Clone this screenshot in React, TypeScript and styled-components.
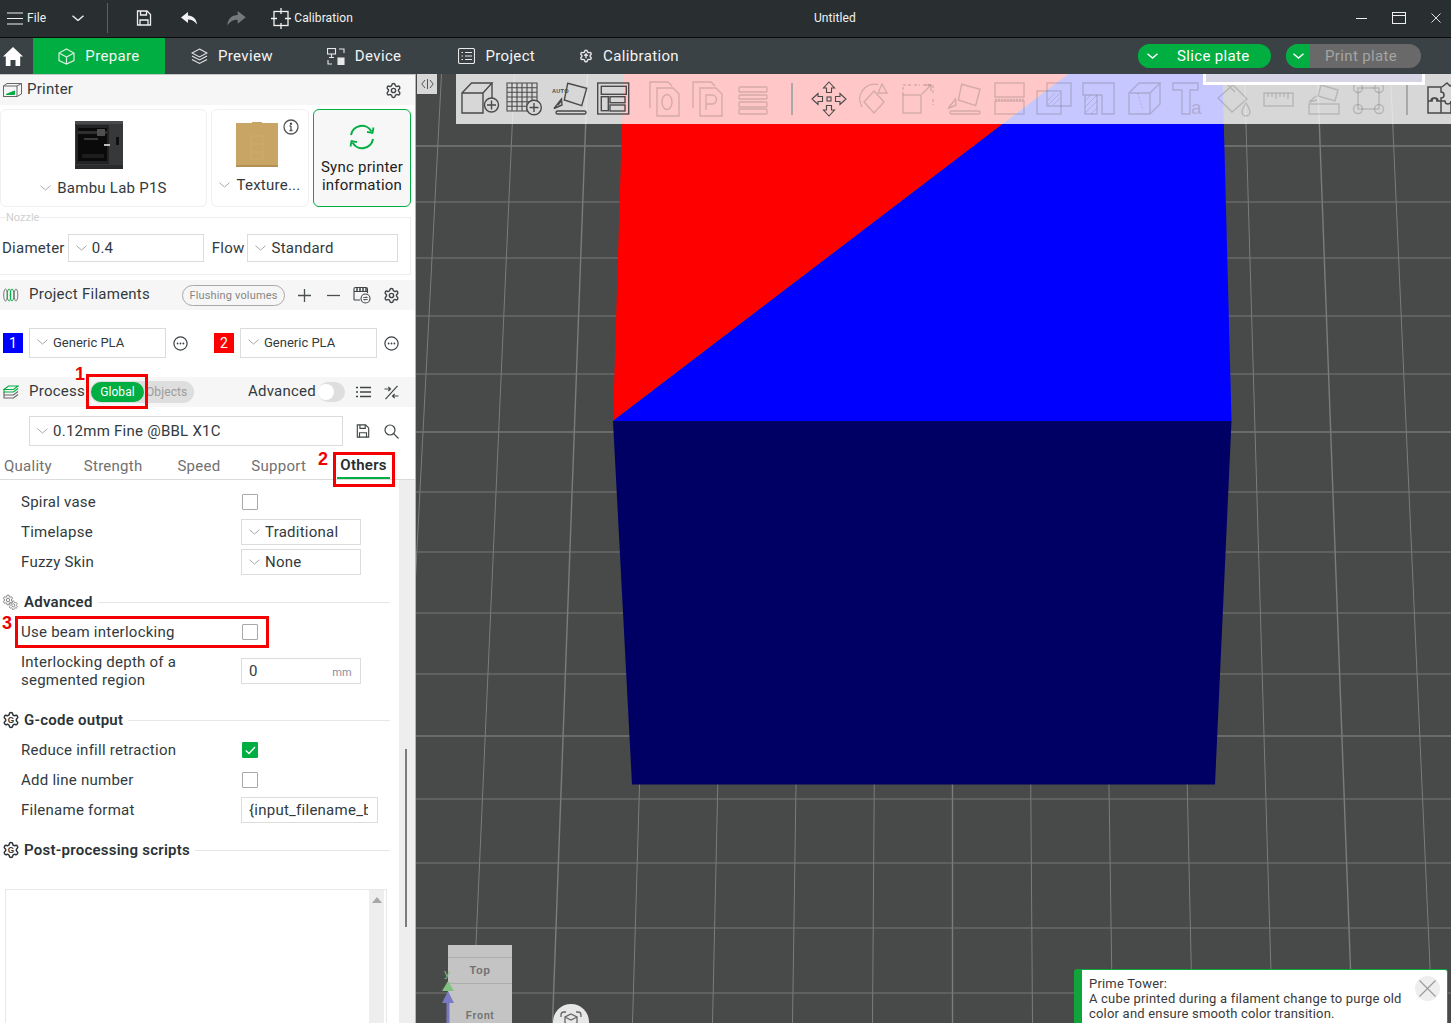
import React from "react";
import styled, { createGlobalStyle } from "styled-components";

const FONT = `Roboto, "Noto Sans", "Liberation Sans", sans-serif`;

const Global = createGlobalStyle`
  html, body { margin: 0; height: 100%; overflow: hidden; background: #484a49; }
  #root { height: 100%; }
  * { box-sizing: border-box; }
  body { font-family: ${FONT}; font-size: 15px; letter-spacing: .25px; color: #323a3d; }
`;

const Page = styled.div`
  height: 100vh; display: flex; flex-direction: column; overflow: hidden;
`;

/* ---------- title bar ---------- */
const TitleBar = styled.header`
  height: 38px; flex: none; display: flex; align-items: center; padding-bottom: 1px;
  background: #292e30; border-bottom: 1px solid #0b0b0b; color: #f2f2f2; font-size: 12px; letter-spacing: .1px;
`;
const TitleItem = styled.span<{ $ml?: number }>`
  display: inline-flex; align-items: center; flex: none; margin-left: ${p => p.$ml ?? 0}px;
`;
const TitleDivider = styled.i`
  width: 1px; height: 30px; background: #5b6062; margin-left: 23px; flex: none;
`;
const WindowControls = styled.div`
  margin-left: auto; display: flex; align-items: center; gap: 25px; padding-right: 10px;
`;

/* ---------- main nav ---------- */
const NavBar = styled.nav`
  height: 36px; flex: none; display: flex; align-items: center;
  background: #3b4245; color: #f4f4f4; font-size: 15px; letter-spacing: .35px;
`;
const HomeSlot = styled.span`
  width: 33px; height: 100%; display: flex; align-items: center; padding-left: 3px;
`;
const NavTab = styled.span<{ $active?: boolean; $ml?: number }>`
  height: 100%; display: flex; align-items: center; justify-content: center; gap: 10px; flex: none;
  width: ${p => (p.$active ? "132px" : "auto")};
  margin-left: ${p => p.$ml ?? 0}px;
  background: ${p => (p.$active ? "#00ae42" : "transparent")};
`;
const NavRight = styled.div`
  margin-left: auto; display: flex; align-items: center; gap: 15px; padding-right: 30px;
`;
const PlateButton = styled.span<{ $off?: boolean }>`
  width: ${p => (p.$off ? 135 : 133)}px; height: 24px; border-radius: 12px; overflow: hidden;
  display: flex; align-items: center; font-size: 15px; position: relative;
  background: ${p => (p.$off ? "#696969" : "#00ae42")};
  color: ${p => (p.$off ? "#a4a4a4" : "#ffffff")};
`;
const PlateChevron = styled.span<{ $w: number }>`
  width: ${p => p.$w}px; height: 100%; background: #00ae42; display: flex; align-items: center;
  justify-content: center; flex: none;
`;
const PlateText = styled.span<{ $ml: number }>`
  margin-left: ${p => p.$ml}px;
`;

/* ---------- workspace ---------- */
const Workspace = styled.main`
  flex: 1; min-height: 0; display: flex;
`;
const Sidebar = styled.aside`
  position: relative; width: 416px; flex: none; background: #fff; overflow: hidden;
  border-top: 1px solid #c4c6c6; border-right: 1px solid #b5b5b5;
  display: flex; flex-direction: column;
`;
const HeaderBar = styled.div<{ $mt?: number }>`
  height: 30px; flex: none; display: flex; align-items: center; background: #f6f6f6;
  margin-top: ${p => p.$mt ?? 0}px; padding-left: 3px;
`;
const HeaderTitle = styled.span<{ $ml: number }>`
  margin-left: ${p => p.$ml}px; font-size: 15px; color: #323a3d; padding-bottom: 2px;
`;
const HeaderTools = styled.div<{ $pr: number; $gap?: number }>`
  margin-left: auto; display: flex; align-items: center; padding-right: ${p => p.$pr}px; gap: ${p => p.$gap ?? 0}px;
`;
const IconSlot = styled.span<{ $ml?: number }>`
  width: 28px; height: 24px; display: flex; align-items: center; justify-content: center; color: #3f4547;
  margin-left: ${p => p.$ml ?? 0}px;
`;
const FlushPill = styled.span`
  height: 21px; width: 103px; border: 1px solid #a9a9a9; border-radius: 11px; color: #868686; font-size: 11px;
  display: flex; align-items: center; justify-content: center; margin-right: 4px; letter-spacing: .15px;
`;

const PrinterCards = styled.div`
  display: flex; gap: 4px; margin-top: 4px; height: 98px; flex: none;
`;
const Card = styled.div<{ $w: number }>`
  position: relative; width: ${p => p.$w}px; border: 1px solid #f0f0f0; border-radius: 6px; display: flex;
  flex-direction: column; align-items: center; flex: none; color: #323a3d;
`;
const CardLabel = styled.span<{ $bottom: number }>`
  display: flex; align-items: center; gap: 6px; position: absolute; bottom: ${p => p.$bottom}px; left: 0; right: 0;
  justify-content: center; white-space: nowrap;
`;
const CardPhoto = styled.svg<{ $mr: number; $mt: number }>`
  margin-right: ${p => p.$mr}px; margin-top: ${p => p.$mt}px; flex: none;
`;
const SyncCard = styled.div`
  width: 98px; border: 1px solid #00ae42; border-radius: 6px; background: #f7f7f7; flex: none;
  display: flex; flex-direction: column; align-items: center; padding-top: 14px;
  font-size: 15px; line-height: 18px; text-align: center; color: #222;
`;
const SyncGlyph = styled.svg`
  margin-bottom: 8px; flex: none;
`;
const InfoBadge = styled.span`
  position: absolute; top: 9px; right: 9px; display: flex;
`;

const NozzleBox = styled.div`
  margin: 10px 0 0; padding: 4px 0 0 2px; width: 411px; height: 58px; flex: none;
  border: 1px solid #eeeeee; border-left: 0; display: flex; align-items: center; position: relative;
`;
const NozzleLegend = styled.span`
  position: absolute; top: -7px; left: 5px; background: #fff; padding: 0 1px; font-size: 11px; color: #cfcfcf; letter-spacing: 0;
`;
const FieldLabel = styled.span<{ $ml?: number }>`
  margin-left: ${p => p.$ml ?? 0}px; margin-right: 2px; font-size: 15px;
`;
const Select = styled.div<{ $w: number; $h?: number; $size?: number; $ml?: number }>`
  width: ${p => p.$w}px; height: ${p => p.$h ?? 28}px; margin-left: ${p => p.$ml ?? 0}px;
  border: 1px solid #dcdcdc; background: #fff; display: flex; align-items: center; gap: 5px; padding-left: 7px;
  font-size: ${p => p.$size ?? 15}px; color: #323a3d; flex: none; white-space: nowrap; overflow: hidden;
  letter-spacing: ${p => (p.$size ? "0" : ".25px")}; padding-bottom: ${p => (p.$size ? 2 : 0)}px;
`;

const FilamentRow = styled.div`
  margin-top: 18px; height: 30px; flex: none; display: flex; align-items: center; padding-left: 3px;
`;
const Swatch = styled.span<{ $c: string; $ml?: number }>`
  width: 20px; height: 20px; background: ${p => p.$c}; color: #fff; font-size: 14px; flex: none;
  display: flex; align-items: center; justify-content: center; margin-left: ${p => p.$ml ?? 0}px;
`;
const MoreDots = styled.span`
  width: 29px; display: flex; justify-content: center; flex: none;
`;
const ModeToggle = styled.div`
  position: relative; margin-left: 5px; width: 104px; height: 22px; background: #dedede; border-radius: 11px;
  display: flex; align-items: center; font-size: 12px; color: #9b9b9b; letter-spacing: .1px;
`;
const ModeOn = styled.span`
  width: 53px; height: 20px; margin-left: 1px; border-radius: 10px; background: #00ae42; color: #fff;
  display: flex; align-items: center; justify-content: center;
`;
const ModeOff = styled.span`
  margin-left: 2px;
`;
const AdvancedLabel = styled.span`
  margin-right: 2px; padding-bottom: 2px;
`;
const Switch = styled.span`
  width: 27px; height: 20px; border-radius: 10px; background: #dedede; position: relative; margin-right: 4px; display: block;
  &::after { content: ""; position: absolute; left: 0; top: 2px; width: 16px; height: 16px; border-radius: 50%; background: #fff; }
`;
const PresetRow = styled.div`
  margin-top: 9px; height: 30px; flex: none; display: flex; align-items: center; padding-left: 29px;
`;
const Tabs = styled.div`
  height: 34px; flex: none; display: flex; border-bottom: 1px solid #dcdcdc; position: relative;
`;
const Tab = styled.span<{ $x: number; $active?: boolean }>`
  margin-left: ${p => p.$x}px; height: 100%; display: flex; align-items: center; padding-top: 6px; flex: none;
  color: ${p => (p.$active ? "#262e30" : "#717171")}; font-weight: ${p => (p.$active ? 600 : 400)};
  ${p => p.$active && `border-bottom: 2px solid #00ae42; height: 33px; width: 53px; justify-content: center;`}
`;

const Body = styled.div`
  flex: 1; min-height: 0; display: flex;
`;
const Content = styled.div`
  width: 399px; flex: none; padding-top: 7px; display: flex; flex-direction: column;
`;
const Track = styled.div`
  flex: 1; background: #eeeeee; position: relative;
`;
const Thumb = styled.i`
  position: absolute; left: 6px; top: 269px; width: 2px; height: 178px; background: #7b7b7b;
`;
const Row = styled.div<{ $h?: number }>`
  height: ${p => p.$h ?? 30}px; flex: none; display: flex; align-items: center; padding-left: 21px;
`;
const RowLabel = styled.span`
  width: 220px; flex: none; line-height: 18px;
`;
const Check = styled.span<{ $on?: boolean }>`
  width: 16px; height: 16px; margin-left: 1px; flex: none; display: flex; align-items: center; justify-content: center;
  border: 1px solid ${p => (p.$on ? "#00ae42" : "#a8a8a8")}; border-radius: 1px;
  background: ${p => (p.$on ? "#00ae42" : "#fff")};
`;
const TextField = styled.div<{ $w: number }>`
  width: ${p => p.$w}px; height: 26px; border: 1px solid #dcdcdc; display: flex; align-items: center; padding: 0 7px;
  justify-content: space-between; flex: none; overflow: hidden; white-space: nowrap;
`;
const ClippedValue = styled.span`
  width: 119px; overflow: hidden; flex: none;
`;
const Unit = styled.span`
  font-size: 11px; color: #8f8a9b; padding: 3px 1px 0 0;
`;
const SectionHead = styled.div`
  margin-top: 10px; height: 30px; flex: none; display: flex; align-items: center; padding: 0 9px 0 2px;
`;
const SectionTitle = styled.b`
  margin-left: 6px; margin-right: 5px; font-weight: 600; color: #2b3336; white-space: nowrap;
`;
const SectionRule = styled.i`
  flex: 1; height: 1px; background: #e6e6e6;
`;
const GearGSvg = styled.svg`
  margin-right: -2px; flex: none;
`;
const ScriptBox = styled.div`
  margin: 24px 0 0 5px; width: 382px; flex: 1; min-height: 160px; border: 1px solid #e8e8e8; display: flex; justify-content: flex-end;
`;
const ScriptScroll = styled.div`
  width: 15px; margin-right: 2px; background: #eeeeee; display: flex; justify-content: center; padding-top: 7px;
  &::before { content: ""; width: 0; height: 0; border: 5px solid transparent; border-top: 0; border-bottom: 6px solid #a7a7a7; }
`;

/* annotation marks lying over the panel */
const Mark = styled.span<{ $x: number; $y: number; $w: number; $h: number }>`
  position: absolute; left: ${p => p.$x}px; top: ${p => p.$y}px; width: ${p => p.$w}px; height: ${p => p.$h}px;
  border: 3px solid #f40000; pointer-events: none;
`;
const MarkNumber = styled.span<{ $x: number; $y: number }>`
  position: absolute; left: ${p => p.$x}px; top: ${p => p.$y}px; color: #ee0000; font: 700 18px/18px "Liberation Sans", sans-serif; letter-spacing: 0;
`;

/* ---------- viewport ---------- */
const Viewport = styled.section`
  position: relative; flex: 1; min-width: 0; overflow: hidden; background: #484a49;
`;
const Scene = styled.svg`
  display: block; width: 100%; height: 100%;
`;
const CollapseButton = styled.span`
  position: absolute; left: 1px; top: 0; width: 20px; height: 20px; background: #d8d8d8; display: flex;
  align-items: center; justify-content: center;
`;
const Toolbar = styled.div`
  position: absolute; left: 40px; right: 0; top: 0; height: 50px; background: rgba(255,255,255,.78);
  display: flex; align-items: center; padding-left: 6px; overflow: hidden;
`;
const ToolGroup = styled.div<{ $ml?: number }>`
  display: flex; gap: 9px; flex: none; margin-left: ${p => p.$ml ?? 0}px;
`;
const ToolDivider = styled.i<{ $ml: number; $mr: number }>`
  width: 2px; height: 32px; background: #a9a9a9; flex: none; margin: 0 ${p => p.$mr}px 0 ${p => p.$ml}px;
`;
const Tool = styled.svg<{ $off?: boolean }>`
  width: 36px; height: 36px; flex: none; fill: none; stroke-width: 1.4; overflow: visible;
  stroke: ${p => (p.$off ? "rgba(90,90,90,.26)" : "#4a4a4a")};
  color: ${p => (p.$off ? "rgba(90,90,90,.26)" : "#4a4a4a")};
`;
const ToolGlyph = styled.text`
  fill: currentColor; stroke: none; font-family: "Liberation Sans", sans-serif;
`;
const TopFrame = styled.div`
  position: absolute; left: 787px; top: 0; width: 222px; height: 11px; background: #d5d5e6;
  border: 3px solid #fff; border-top: 0;
`;
const Hint = styled.div`
  position: absolute; left: 658px; top: 895px; width: 374px; height: 64px; background: #fff;
  border: 1px solid #10a53a; border-left: 8px solid #10a53a; border-radius: 3px;
  padding: 6px 40px 0 7px; font-size: 13px; line-height: 15px; color: #3a3a3a; letter-spacing: .2px;
`;
const HintClose = styled.span`
  position: absolute; right: 7px; top: 6px; width: 25px; height: 25px; border-radius: 50%; background: #eeeeee;
  display: flex; align-items: center; justify-content: center;
`;

/* ---------- icons ---------- */
const GEAR = "M9.671 4.136a2.34 2.34 0 0 1 4.659 0 2.34 2.34 0 0 0 3.319 1.915 2.34 2.34 0 0 1 2.33 4.033 2.34 2.34 0 0 0 0 3.831 2.34 2.34 0 0 1-2.33 4.033 2.34 2.34 0 0 0-3.319 1.915 2.34 2.34 0 0 1-4.659 0 2.34 2.34 0 0 0-3.32-1.915 2.34 2.34 0 0 1-2.33-4.033 2.34 2.34 0 0 0 0-3.831A2.34 2.34 0 0 1 6.35 6.051a2.34 2.34 0 0 0 3.319-1.915";

const Chevron = ({ w = 11, c = "#a8a8a8", sw = 1 }: { w?: number; c?: string; sw?: number }) => (
  <svg width={w} height={w * 0.55} viewBox="0 0 11 6" fill="none" stroke={c} strokeWidth={sw}><path d="M.5.7 5.5 5l5-4.3" /></svg>
);
const Gear = ({ s = 17 }: { s?: number }) => (
  <svg width={s} height={s} viewBox="0 0 24 24" fill="none" stroke="#3f4547" strokeWidth="2"><path d={GEAR} /><circle cx="12" cy="12" r="3" /></svg>
);
const GearG = () => (
  <GearGSvg width="18" height="18" viewBox="0 0 24 24" fill="none" stroke="#2b3336" strokeWidth="2">
    <path d={GEAR} /><text x="12" y="16" textAnchor="middle" fontSize="11" fontWeight="700" fill="#2b3336" stroke="none" fontFamily="Liberation Sans">G</text>
  </GearGSvg>
);
const GearPair = () => (
  <svg width="16" height="16" viewBox="0 0 16 16" fill="none" stroke="#7d7d7d">
    <g transform="scale(.5)"><path d={GEAR} strokeWidth="2" /><circle cx="12" cy="12" r="3.500" strokeWidth="2" /></g>
    <g transform="translate(6,6) scale(.44)"><path d={GEAR} strokeWidth="2" /><circle cx="12" cy="12" r="3.500" strokeWidth="2" /></g>
  </svg>
);
const Dots = () => (
  <svg width="15" height="15" viewBox="0 0 15 15" fill="#3a4144" stroke="none">
    <circle cx="7.500" cy="7.500" r="6.600" fill="none" stroke="#3a4144" strokeWidth="1.200" />
    <circle cx="4.600" cy="7.500" r=".9" /><circle cx="7.500" cy="7.500" r=".9" /><circle cx="10.400" cy="7.500" r=".9" />
  </svg>
);
const PrinterIcon = () => (
  <svg width="19" height="14" viewBox="0 0 19 14" fill="none" stroke="#666" strokeWidth="1">
    <rect x=".5" y="3" width="13.500" height="10.500" /><path d="M.5 3 4 .5h14.500V11L14 13.500M14 3l4.500-2.500" />
    <path d="M3 11.500h8.500V8z" fill="#00ae42" stroke="#00ae42" />
  </svg>
);
const FilamentIcon = () => (
  <svg width="16" height="14" viewBox="0 0 16 14" fill="none" strokeWidth="1">
    <ellipse cx="2.500" cy="7" rx="1.800" ry="6" stroke="#777" />
    <ellipse cx="6" cy="7" rx="1.800" ry="6" stroke="#00ae42" /><ellipse cx="9" cy="7" rx="1.800" ry="6" stroke="#00ae42" />
    <ellipse cx="13" cy="7" rx="1.800" ry="6" stroke="#777" />
  </svg>
);
const LayersIcon = () => (
  <svg width="16" height="14" viewBox="0 0 16 14" fill="none" strokeWidth="1.100">
    <path d="M1 4.500 5.500 1H15l-4.500 3.500z" stroke="#00ae42" /><path d="M1 4.500v2.500h9.500L15 3.500" stroke="#00ae42" />
    <path d="M1 7v3h9.500L15 6.500M1 10v3h9.500L15 9.500" stroke="#666" />
  </svg>
);
const ListIcon = () => (
  <svg width="15" height="12" viewBox="0 0 15 12" stroke="#3f4547" strokeWidth="1.300" fill="none">
    <path d="M4 1.500h11M4 6h11M4 10.500h11M0 1.500h2M0 6h2M0 10.500h2" />
  </svg>
);
const CompareIcon = () => (
  <svg width="15" height="15" viewBox="0 0 15 15" stroke="#3f4547" strokeWidth="1.200" fill="none">
    <path d="M13.500 .8 1.500 14.200M.5 4h6M4.300 1.800 6.500 4 4.300 6.200M14.500 11h-6M10.700 8.800 8.500 11l2.200 2.200" />
  </svg>
);
const SaveIcon = ({ c = "#3f4547", s = 14 }: { c?: string; s?: number }) => (
  <svg width={s} height={s} viewBox="0 0 16 16" fill="none" stroke={c} strokeWidth="1.300">
    <path d="M1.500 1h9.500l3.500 3.500v10.500H1.500z" /><path d="M4.500 1v4h6V1M4 15v-5h8v5" />
  </svg>
);
const SearchIcon = () => (
  <svg width="15" height="15" viewBox="0 0 15 15" fill="none" stroke="#3f4547" strokeWidth="1.200"><circle cx="6" cy="6" r="5" /><path d="M9.700 9.700 14.500 14.500" /></svg>
);
const Tick = () => (
  <svg width="11" height="9" viewBox="0 0 11 9" fill="none" stroke="#fff" strokeWidth="1.300"><path d="M.8 4.500 4 7.500 10 1" /></svg>
);
const PlusIcon = () => <svg width="13" height="13" viewBox="0 0 13 13" stroke="#4a5052" strokeWidth="1.300"><path d="M6.500 0v13M0 6.500h13" /></svg>;
const MinusIcon = () => <svg width="13" height="13" viewBox="0 0 13 13" stroke="#4a5052" strokeWidth="1.300"><path d="M0 6.500h13" /></svg>;
const SpoolSwapIcon = () => (
  <svg width="18" height="18" viewBox="0 0 18 18" fill="none" stroke="#3f4547" strokeWidth="1.100">
    <path d="M1 14V3q0-1.500 1.500-1.500H13Q14.500 1.500 14.500 3v4M1 5.500h13.500M1 14h6" />
    <path d="M4 2v3M7 2v3M10 2v3M13 2v3" strokeWidth="1.500" />
    <circle cx="12.500" cy="12.500" r="4.500" /><path d="M10.300 11.500h4l-1-1M14.700 13.500h-4l1 1" strokeWidth=".9" />
  </svg>
);
const CubeSmall = () => (
  <svg width="17" height="17" viewBox="0 0 17 17" fill="none" stroke="#d7efe0" strokeWidth="1.200">
    <path d="M8.500 1 16 5v7.500L8.500 16 1 12.500V5zM1 5l7.500 4L16 5M8.500 9v7" />
  </svg>
);
const LayerStack = () => (
  <svg width="17" height="17" viewBox="0 0 17 17" fill="none" stroke="#e8e8e8" strokeWidth="1.100">
    <path d="M8.500 1 16 5 8.500 9 1 5zM1 8l7.500 4L16 8M1 11.500l7.500 4 7.500-4" />
  </svg>
);
const DeviceIcon = () => (
  <svg width="18" height="17" viewBox="0 0 18 17" fill="none" stroke="#e8e8e8" strokeWidth="1.100">
    <rect x=".5" y=".5" width="8" height="5.500" /><path d="M4.500 6v3M2 9.500h5M12 1h5v4M1 12v4h4" />
    <rect x="11" y="10" width="6" height="6.500" fill="#e8e8e8" />
  </svg>
);
const ProjectIcon = () => (
  <svg width="17" height="16" viewBox="0 0 17 16" fill="none" stroke="#e8e8e8" strokeWidth="1.100">
    <rect x=".5" y=".5" width="16" height="15" rx="1.500" /><path d="M3.500 4.500h1.500M3.500 8h1.500M3.500 11.500h1.500M7 4.500h7M7 8h7M7 11.500h7" />
  </svg>
);
const CalibrateGear = () => (
  <svg width="14" height="14" viewBox="0 0 24 24" fill="none" stroke="#e8e8e8" strokeWidth="2.400">
    <path d={GEAR} /><path d="M12 16V9M9 11.500 12 8.500l3 3" />
  </svg>
);
const HomeIcon = () => (
  <svg width="20" height="19" viewBox="0 0 20 19" fill="#fff"><path d="M10 0 20 9.500h-2.800V19h-4.700v-6h-5v6H2.800V9.500H0z" /></svg>
);
const Sync = () => (
  <SyncGlyph width="30" height="26" viewBox="0 0 30 26" fill="none" stroke="#00ae42" strokeWidth="2">
    <path d="M4 11a11 11 0 0 1 20.500-3.500M26 15a11 11 0 0 1-20.500 3.500" />
    <path d="M26.500 3.500 25.500 9l-5.500-1.200M3.500 22.500l1-5.500 5.500 1.200" strokeWidth="1.800" />
  </SyncGlyph>
);
const PrinterPhoto = () => (
  <CardPhoto $mr={9} $mt={11} width="48" height="48" viewBox="0 0 48 48">
    <rect width="48" height="48" fill="#37383a" />
    <rect x="0" y="0" width="48" height="3" fill="#484a4c" />
    <rect x="1" y="4" width="33" height="39" fill="#222324" />
    <rect x="3" y="7" width="29" height="33" fill="#0a0a0a" />
    <rect x="3" y="10" width="29" height="3" fill="#2e2e2e" />
    <rect x="22" y="8" width="8" height="7" fill="#4f4f4f" />
    <rect x="9" y="17" width="14" height="2" fill="#3a3a3a" />
    <rect x="7" y="33" width="22" height="4" fill="#1d1d1d" />
    <rect x="29" y="23" width="6" height="2" fill="#bdbdbd" />
    <rect x="41" y="16" width="3" height="8" fill="#0e0e0e" />
    <rect x="0" y="44" width="48" height="4" fill="#2a2b2c" />
  </CardPhoto>
);
const PlatePhoto = () => (
  <CardPhoto $mr={6} $mt={12} width="42" height="46" viewBox="0 0 42 46">
    <rect x="0" y="1" width="42" height="44" fill="#c8a565" />
    <rect x="16" y="0" width="10" height="3" fill="#c8a565" />
    <g fill="none" stroke="#d0b078" strokeWidth=".6"><rect x="15" y="14" width="12" height="23" /><path d="M15 22h12M15 30h12" /></g>
    <rect x="0" y="43" width="42" height="2" fill="#b49152" />
  </CardPhoto>
);
const InfoIcon = () => (
  <svg width="16" height="16" viewBox="0 0 16 16" fill="none" stroke="#555" strokeWidth="1.300">
    <circle cx="8" cy="8" r="7" /><path d="M8 7v4.500M6.500 7H8M6.500 11.500h3" /><circle cx="8" cy="4.700" r=".6" fill="#555" />
  </svg>
);

/* toolbar icons */
const ToolIcons = {
  addCube: (
    <Tool viewBox="0 0 36 36"><path d="M0 12h21v20H0zM0 12 9.500 2H30l-9 10M30 2v15" /><circle cx="29.500" cy="24" r="7" fill="#d7d7d7" /><path d="M29.500 19.500v9M25 24h9" /></Tool>
  ),
  addPlate: (
    <Tool viewBox="0 0 36 36"><path d="M0 2h30v28H0zM5 2v28M10 2v28M15 2v28M20 2v28M25 2v28M0 6.700h30M0 11.300h30M0 16h30M0 20.700h30M0 25.300h30" strokeWidth="1.100" /><circle cx="27" cy="26.500" r="7.300" fill="#d7d7d7" /><path d="M27 22v9M22.500 26.500h9" /></Tool>
  ),
  auto: (
    <Tool viewBox="0 0 36 36"><path d="M15.700 2.300 34.700 7.300 29.700 24.700 12.300 19z" /><ToolGlyph x="0" y="11.500" fontSize="5.600" fontWeight="700">AUTO</ToolGlyph><path d="M9.500 18 2 27.500l8-3.500zM6 24l4-5" /><rect x="4" y="30" width="30" height="3" rx="1.500" /></Tool>
  ),
  arrange: (
    <Tool viewBox="0 0 36 36"><rect x=".7" y="2" width="31" height="31" /><rect x="4.300" y="5.300" width="25" height="8" /><rect x="4.300" y="15.700" width="7" height="14" /><rect x="13" y="15.700" width="15" height="6" /><rect x="13" y="24" width="15" height="6" /></Tool>
  ),
  copyZero: (
    <Tool $off viewBox="0 0 36 36"><path d="M3 27V1h18l4 4M10 7h16l6 6v22H10z" /><ellipse cx="20" cy="21" rx="5" ry="7.500" /></Tool>
  ),
  copyP: (
    <Tool $off viewBox="0 0 36 36"><path d="M1 27V1h18l4 4M8 7h16l6 6v22H8z" /><path d="M14 29V14h6a4 4 0 0 1 0 9h-6" /></Tool>
  ),
  lines: (
    <Tool $off viewBox="0 0 36 36"><rect x="2" y="6" width="28" height="5" rx="1" /><rect x="2" y="14" width="28" height="4" rx="1" /><rect x="2" y="21" width="28" height="5" rx="1" /><rect x="2" y="28" width="28" height="5" rx="1" /></Tool>
  ),
  move: (
    <Tool viewBox="0 0 36 36">
      {[0, 90, 180, 270].map(a => (
        <path key={a} transform={`rotate(${a} 18 18)`} d="M18 1l5.500 6h-3v4.500h-5V7h-3z" strokeWidth="1.100" />
      ))}
      <rect x="16" y="16" width="4" height="4" strokeWidth="1.100" />
    </Tool>
  ),
  rotate: (
    <Tool $off viewBox="0 0 36 36"><path d="M6 26A15 15 0 0 1 22 3.500" /><path d="M18 10l10 11-10 11-10-11z" /><path d="M26 3l5 9-9 0z" /></Tool>
  ),
  scale: (
    <Tool $off viewBox="0 0 36 36"><path d="M2 14V4h8M13 4h6M22 4h10v10M32 18v6" strokeDasharray="3 2" /><rect x="2" y="14" width="18" height="18" /><path d="M21 13l9-9M24 4h6v6" /></Tool>
  ),
  lay: (
    <Tool $off viewBox="0 0 36 36"><path d="M15.700 3.300 34 8.300 29.700 24.700 12.300 19z" /><path d="M9.500 18 2 27.500l8-3.500z" /><rect x="4" y="30" width="30" height="3" rx="1.500" /></Tool>
  ),
  cut: (
    <Tool $off viewBox="0 0 36 36"><rect x="4" y="2" width="29" height="14" /><path d="M4 18.500h29" strokeDasharray="2 1" /><rect x="4" y="20" width="29" height="13" /></Tool>
  ),
  boolean: (
    <Tool $off viewBox="0 0 36 36"><rect x="1" y="10" width="24" height="23" /><rect x="11" y="2" width="24" height="23" /><path d="M12 24l12-12M12 19l7-7M17 24l7-7" strokeWidth=".8" /></Tool>
  ),
  support: (
    <Tool $off viewBox="0 0 36 36"><path d="M2 2h31v31H21V14H2zM4 14h12v19H4z" /><path d="M4 20l6-6M4 26l12-12M4 32l12-12M10 33l6-6" strokeWidth=".8" /></Tool>
  ),
  seam: (
    <Tool $off viewBox="0 0 36 36"><path d="M3 12h21v21H3zM3 12l10-10h21L24 12M34 2v21L24 33" /><path d="M12 12l2 8 3 9" strokeDasharray="2 1.500" strokeWidth=".9" /></Tool>
  ),
  text: (
    <Tool $off viewBox="0 0 36 36"><path d="M2 2h25v7h-8v24h-8V9H2z" /><ToolGlyph x="20" y="33" fontSize="19">a</ToolGlyph></Tool>
  ),
  bucket: (
    <Tool $off viewBox="0 0 36 36"><path d="M2 17 17 4l14 14-15 13zM9 1l10 10" /><path d="M30 22c-3 5-4 7-4 9a4 4 0 0 0 8 0c0-2-1-4-4-9z" /></Tool>
  ),
  ruler: (
    <Tool $off viewBox="0 0 36 36"><rect x="3" y="12" width="29" height="13" /><path d="M7 12v4M11 12v4M15 12v6M19 12v4M23 12v4M27 12v6" /></Tool>
  ),
  assembly: (
    <Tool $off viewBox="0 0 36 36"><rect x="3" y="23" width="30" height="10" /><path d="M15 4 32 9l-3 11-17-5zM10 15 3 21l8-2" /></Tool>
  ),
  corners: (
    <Tool $off viewBox="0 0 36 36"><rect x="7" y="7" width="21" height="21" /><circle cx="7" cy="7" r="4.500" /><circle cx="28" cy="7" r="4.500" /><circle cx="7" cy="28" r="4.500" /><circle cx="28" cy="28" r="4.500" /></Tool>
  ),
  puzzle: (
    <Tool viewBox="0 0 36 36"><path d="M2 6h13v5a3 3 0 0 1 0 6v3h-4a3 3 0 0 0-6 0H2zM2 20h4a3 3 0 0 1 6 0h3v12H2zM15 20h4a3 3 0 0 0 6 0V32H15zM16 6l5-4 3 3 4-3 2 5 5 1" strokeWidth="1.500" /></Tool>
  ),
};

/* viewport drawing */
const HORIZONTAL = [146, 202, 258, 316, 374, 432, 492, 552, 613, 674, 736, 799, 863, 928, 993];
const VERTICAL = Array.from({ length: 16 }, (_, i) => i - 7);
const BOLD_ROWS = new Set([146, 432, 736]);

const ViewScene = () => (
  <Scene viewBox="416 74 1035 949" preserveAspectRatio="none">
    {VERTICAL.map(k => (
      <line key={k} x1={952.5 + k * 73} y1={74} x2={952.5 + k * 80} y2={1023} stroke="#7b7c7b" strokeWidth={k % 5 === 0 ? 1.4 : 1} />
    ))}
    {HORIZONTAL.map(y => (
      <line key={y} x1={416} x2={1451} y1={y} y2={y} stroke="#767776" strokeWidth={BOLD_ROWS.has(y) ? 1.6 : 1.1} />
    ))}
    <polygon points="1068,74 1222.500,74 1231.500,421 613,421" fill="#0000ff" />
    <polygon points="623.500,74 1068,74 613,420.500" fill="#ff0000" />
    <polygon points="613,421 1231.500,421 1215,784.500 632,784.500" fill="#000064" />

    <rect x="448" y="945" width="64" height="78" fill="#c4c4c4" />
    <path d="M448 957.500h64M448 983.500h64" stroke="#adadad" />
    <text x="480" y="974" textAnchor="middle" fontSize="11" fontWeight="700" letterSpacing=".6" fill="#727272" fontFamily="Liberation Sans">Top</text>
    <text x="480" y="1019" textAnchor="middle" fontSize="10" fontWeight="700" letterSpacing=".6" fill="#727272" fontFamily="Liberation Sans">Front</text>
    <text x="447" y="977" textAnchor="middle" fontSize="11" fill="#86c086" fontFamily="Liberation Sans">y</text>
    <path d="M448 981 442 991h12z" fill="#80c080" />
    <path d="M448 991 442 1003h4.500v20h3v-20h4.500z" fill="#7a7ac4" />
    <circle cx="571" cy="1022" r="18" fill="#e7e7e7" />
    <path d="M561 1017v-2q0-3 3-3h2M581 1017v-2q0-3-3-3h-2M571 1014l6 3v6l-6 3-6-3v-6zM565 1017l6 3 6-3" fill="none" stroke="#666" strokeWidth="1.300" />
  </Scene>
);

const App = () => (
  <Page>
    <Global />
    <TitleBar>
      <TitleItem $ml={7}>
        <svg width="16" height="13" viewBox="0 0 16 13" stroke="#f2f2f2" strokeWidth="1.200"><path d="M0 1h16M0 6.500h16M0 12h16" /></svg>
      </TitleItem>
      <TitleItem $ml={4}>File</TitleItem>
      <TitleItem $ml={26}><Chevron w={12} c="#eeeeee" sw={1.300} /></TitleItem>
      <TitleDivider />
      <TitleItem $ml={28}><SaveIcon c="#eeeeee" s={16} /></TitleItem>
      <TitleItem $ml={29}>
        <svg width="16" height="13" viewBox="0 0 16 13" fill="#f2f2f2"><path d="M7 0 0 5.500 7 11V7.500c4 0 6.500 1.500 9 5C15.500 7 12 3.500 7 3.500z" /></svg>
      </TitleItem>
      <TitleItem $ml={30}>
        <svg width="19" height="15" viewBox="0 0 16 13" fill="#75797b"><path d="M9 0l7 5.500L9 11V7.500c-4 0-6.500 1.500-9 5C.5 7 4 3.500 9 3.500z" /></svg>
      </TitleItem>
      <TitleItem $ml={25}>
        <svg width="20" height="21" viewBox="0 0 20 21" fill="none" stroke="#f2f2f2" strokeWidth="1.300"><rect x="3" y="3.500" width="14" height="14" /><path d="M10 0v6M10 15v6M0 10.500h6M14 10.500h6" /></svg>
      </TitleItem>
      <TitleItem $ml={3}>Calibration</TitleItem>
      <TitleItem $ml={461}>Untitled</TitleItem>
      <WindowControls>
        <svg width="11" height="1" viewBox="0 0 11 1" stroke="#eee"><path d="M0 .5h11" /></svg>
        <svg width="14" height="12" viewBox="0 0 14 12" fill="none" stroke="#eee"><rect x=".5" y=".5" width="13" height="11" /><path d="M.5 3.500h13" /></svg>
        <svg width="10" height="10" viewBox="0 0 10 10" stroke="#ddd"><path d="M.5.5l9 9M9.500.5l-9 9" /></svg>
      </WindowControls>
    </TitleBar>

    <NavBar>
      <HomeSlot><HomeIcon /></HomeSlot>
      <NavTab $active><CubeSmall />Prepare</NavTab>
      <NavTab $ml={26}><LayerStack />Preview</NavTab>
      <NavTab $ml={54}><DeviceIcon />Device</NavTab>
      <NavTab $ml={57}><ProjectIcon />Project</NavTab>
      <NavTab $ml={44}><CalibrateGear />Calibration</NavTab>
      <NavRight>
        <PlateButton>
          <PlateChevron $w={28}><Chevron w={11} c="#fff" sw={1.400} /></PlateChevron>
          <PlateText $ml={11}>Slice plate</PlateText>
        </PlateButton>
        <PlateButton $off>
          <PlateChevron $w={24}><Chevron w={11} c="#fff" sw={1.400} /></PlateChevron>
          <PlateText $ml={15}>Print plate</PlateText>
        </PlateButton>
      </NavRight>
    </NavBar>

    <Workspace>
      <Sidebar>
        <HeaderBar>
          <PrinterIcon />
          <HeaderTitle $ml={5}>Printer</HeaderTitle>
          <HeaderTools $pr={8}><IconSlot><Gear /></IconSlot></HeaderTools>
        </HeaderBar>
        <PrinterCards>
          <Card $w={207}>
            <PrinterPhoto />
            <CardLabel $bottom={9}><Chevron />Bambu Lab P1S</CardLabel>
          </Card>
          <Card $w={98}>
            <PlatePhoto />
            <InfoBadge><InfoIcon /></InfoBadge>
            <CardLabel $bottom={12}><Chevron />Texture...</CardLabel>
          </Card>
          <SyncCard><Sync />Sync printer<br />information</SyncCard>
        </PrinterCards>

        <NozzleBox>
          <NozzleLegend>Nozzle</NozzleLegend>
          <FieldLabel>Diameter</FieldLabel>
          <Select $w={136} $ml={1}><Chevron />0.4</Select>
          <FieldLabel $ml={8}>Flow</FieldLabel>
          <Select $w={151} $ml={1}><Chevron />Standard</Select>
        </NozzleBox>

        <HeaderBar $mt={5}>
          <FilamentIcon />
          <HeaderTitle $ml={10}>Project Filaments</HeaderTitle>
          <HeaderTools $pr={10} $gap={1}>
            <FlushPill>Flushing volumes</FlushPill>
            <IconSlot><PlusIcon /></IconSlot>
            <IconSlot><MinusIcon /></IconSlot>
            <IconSlot><SpoolSwapIcon /></IconSlot>
            <IconSlot><Gear /></IconSlot>
          </HeaderTools>
        </HeaderBar>

        <FilamentRow>
          <Swatch $c="#0000ff">1</Swatch>
          <Select $w={137} $h={30} $size={13} $ml={6}><Chevron />Generic PLA</Select>
          <MoreDots><Dots /></MoreDots>
          <Swatch $c="#ff0000" $ml={19}>2</Swatch>
          <Select $w={137} $h={30} $size={13} $ml={6}><Chevron />Generic PLA</Select>
          <MoreDots><Dots /></MoreDots>
        </FilamentRow>

        <HeaderBar $mt={19}>
          <LayersIcon />
          <HeaderTitle $ml={10}>Process</HeaderTitle>
          <ModeToggle><ModeOn>Global</ModeOn><ModeOff>Objects</ModeOff></ModeToggle>
          <HeaderTools $pr={10}>
            <AdvancedLabel>Advanced</AdvancedLabel>
            <Switch />
            <IconSlot><ListIcon /></IconSlot>
            <IconSlot><CompareIcon /></IconSlot>
          </HeaderTools>
        </HeaderBar>

        <PresetRow>
          <Select $w={314} $h={30}><Chevron />0.12mm Fine @BBL X1C</Select>
          <IconSlot $ml={6}><SaveIcon /></IconSlot>
          <IconSlot><SearchIcon /></IconSlot>
        </PresetRow>

        <Tabs>
          <Tab $x={4}>Quality</Tab>
          <Tab $x={32}>Strength</Tab>
          <Tab $x={35}>Speed</Tab>
          <Tab $x={31}>Support</Tab>
          <Tab $x={31} $active>Others</Tab>
        </Tabs>

        <Body>
          <Content>
            <Row><RowLabel>Spiral vase</RowLabel><Check /></Row>
            <Row><RowLabel>Timelapse</RowLabel><Select $w={120} $h={26}><Chevron />Traditional</Select></Row>
            <Row><RowLabel>Fuzzy Skin</RowLabel><Select $w={120} $h={26}><Chevron />None</Select></Row>

            <SectionHead><GearPair /><SectionTitle>Advanced</SectionTitle><SectionRule /></SectionHead>
            <Row><RowLabel>Use beam interlocking</RowLabel><Check /></Row>
            <Row $h={48}>
              <RowLabel>Interlocking depth of a<br />segmented region</RowLabel>
              <TextField $w={120}>0<Unit>mm</Unit></TextField>
            </Row>

            <SectionHead><GearG /><SectionTitle>G-code output</SectionTitle><SectionRule /></SectionHead>
            <Row><RowLabel>Reduce infill retraction</RowLabel><Check $on><Tick /></Check></Row>
            <Row><RowLabel>Add line number</RowLabel><Check /></Row>
            <Row><RowLabel>Filename format</RowLabel><TextField $w={137}><ClippedValue>{"{input_filename_b"}</ClippedValue></TextField></Row>

            <SectionHead><GearG /><SectionTitle>Post-processing scripts</SectionTitle><SectionRule /></SectionHead>
            <ScriptBox><ScriptScroll /></ScriptBox>
          </Content>
          <Track><Thumb /></Track>
        </Body>

        <Mark $x={86} $y={299} $w={62} $h={35} />
        <MarkNumber $x={75} $y={290}>1</MarkNumber>
        <Mark $x={333} $y={377} $w={62} $h={35} />
        <MarkNumber $x={318} $y={375}>2</MarkNumber>
        <Mark $x={15} $y={541} $w={254} $h={32} />
        <MarkNumber $x={2} $y={539}>3</MarkNumber>
      </Sidebar>

      <Viewport>
        <ViewScene />
        <CollapseButton>
          <svg width="13" height="10" viewBox="0 0 13 10" fill="none" stroke="#555" strokeWidth="1"><path d="M4 1 .8 5 4 9M9 1l3.200 4L9 9" /><path d="M6.500 0v10" /></svg>
        </CollapseButton>
        <Toolbar>
          <ToolGroup>
            {ToolIcons.addCube}{ToolIcons.addPlate}{ToolIcons.auto}{ToolIcons.arrange}
          </ToolGroup>
          <ToolGroup $ml={14}>
            {ToolIcons.copyZero}{ToolIcons.copyP}{ToolIcons.lines}
          </ToolGroup>
          <ToolDivider $ml={18} $mr={18} />
          <ToolGroup>
            {ToolIcons.move}{ToolIcons.rotate}{ToolIcons.scale}{ToolIcons.lay}{ToolIcons.cut}{ToolIcons.boolean}
            {ToolIcons.support}{ToolIcons.seam}{ToolIcons.text}{ToolIcons.bucket}{ToolIcons.ruler}{ToolIcons.assembly}{ToolIcons.corners}
          </ToolGroup>
          <ToolDivider $ml={19} $mr={18} />
          {ToolIcons.puzzle}
        </Toolbar>
        <TopFrame />
        <Hint>
          Prime Tower:<br />
          A cube printed during a filament change to purge old<br />
          color and ensure smooth color transition.
          <HintClose>
            <svg width="17" height="17" viewBox="0 0 17 17" stroke="#9a9a9a" strokeWidth="1.100"><path d="M.5.500l16 16M16.500.500l-16 16" /></svg>
          </HintClose>
        </Hint>
      </Viewport>
    </Workspace>
  </Page>
);

export default App;
